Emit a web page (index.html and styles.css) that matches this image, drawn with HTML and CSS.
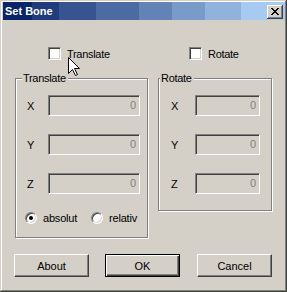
FILE: index.html
```html
<!DOCTYPE html>
<html>

<head>
  <title>Set Bone</title>
  <link rel="stylesheet" href="styles.css">
</head>

<body>
  <div class="window">
    <div class="titlebar">
      <span class="title">Set Bone</span>
      <button class="close" title="Close">
        <svg width="8" height="7" viewBox="0 0 8 7">
          <path d="M0 0h2v1H0zM6 0h2v1H6zM1 1h2v1H1zM5 1h2v1H5zM2 2h4v1H2zM3 3h2v1H3zM2 4h4v1H2zM1 5h2v1H1zM5 5h2v1H5zM0 6h2v1H0zM6 6h2v1H6z" fill="#000"/>
        </svg>
      </button>
    </div>

    <div class="content">
      <div class="toggles">
        <label class="check check-translate"><span class="box"></span>Translate</label>
        <label class="check check-rotate"><span class="box"></span>Rotate</label>
      </div>

      <div class="groups">
        <div class="group group-translate">
          <span class="legend">Translate</span>
          <div class="row"><span class="axis">X</span><span class="field">0</span></div>
          <div class="row"><span class="axis">Y</span><span class="field">0</span></div>
          <div class="row"><span class="axis">Z</span><span class="field">0</span></div>
          <div class="radios">
            <label class="radio"><span class="dot checked"></span>absolut</label>
            <label class="radio"><span class="dot"></span>relativ</label>
          </div>
        </div>

        <div class="group group-rotate">
          <span class="legend">Rotate</span>
          <div class="row"><span class="axis">X</span><span class="field">0</span></div>
          <div class="row"><span class="axis">Y</span><span class="field">0</span></div>
          <div class="row"><span class="axis">Z</span><span class="field">0</span></div>
        </div>
      </div>

      <div class="buttons">
        <button class="btn">About</button>
        <button class="btn btn-default">OK</button>
        <button class="btn btn-cancel">Cancel</button>
      </div>
    </div>

    <svg class="cursor" width="12" height="20" viewBox="0 0 12 20">
      <path d="M0.5 0.5V16.5L4.5 12.5L7.5 18.5L9.5 17.5L6.5 11.5H11.5Z" fill="#fff" stroke="#000" stroke-linejoin="miter"/>
    </svg>
  </div>
</body>

</html>
```

FILE: styles.css
```css
body {
  margin: 0;
  padding: 0;
  background-color: #d4d0c8;
  font-family: "Liberation Sans", Arial, sans-serif;
  font-size: 11px;
  color: #000;
}

.window {
  position: relative;
  width: 287px;
  height: 292px;
  box-sizing: border-box;
  padding: 2px 2px 0 3px;
  background-color: #d4d0c8;
  box-shadow: inset -1px -1px 0 #404040, inset 1px 1px 0 #d4d0c8, inset -2px -2px 0 #808080, inset 2px 2px 0 #fff;
}

/* title bar, stepped like a 256 colour gradient */
.titlebar {
  display: flex;
  align-items: center;
  justify-content: space-between;
  height: 18px;
  padding: 0 2px 0 2px;
  background: linear-gradient(to right,
    #0a246a 0, #0a246a 29px,
    #203c7d 29px, #203c7d 56px,
    #375390 56px, #375390 93px,
    #4d6ba3 93px, #4d6ba3 136px,
    #6383b7 136px, #6383b7 169px,
    #799bca 169px, #799bca 202px,
    #90b2dd 202px, #90b2dd 238px,
    #a6caf0 238px);
}

.title {
  color: #fff;
  font-weight: bold;
  font-size: 11px;
}

.close {
  display: flex;
  align-items: center;
  justify-content: center;
  width: 16px;
  height: 14px;
  padding: 0;
  margin-top: 1px;
  border: none;
  background-color: #d4d0c8;
  box-shadow: inset -1px -1px 0 #404040, inset 1px 1px 0 #fff, inset -2px -2px 0 #808080;
}

.content {
  padding-top: 27px;
}

.toggles,
.groups {
  display: flex;
  gap: 10px;
  margin-left: 12px;
}

.check {
  display: flex;
  align-items: center;
  gap: 6px;
  height: 13px;
  letter-spacing: -0.3px;
}

.check-translate {
  width: 133px;
  padding-left: 33px;
  box-sizing: border-box;
}

.check-rotate {
  padding-left: 31px;
}

.box {
  display: block;
  width: 13px;
  height: 13px;
  box-sizing: border-box;
  background-color: #fff;
  border: 1px solid;
  border-color: #808080 #fff #fff #808080;
  box-shadow: inset 1px 1px 0 #404040, inset -1px -1px 0 #d4d0c8;
}

.groups {
  margin-top: 18px;
  align-items: flex-start;
}

.group {
  position: relative;
  box-sizing: border-box;
  border: 1px solid #808080;
  box-shadow: 1px 1px 0 #fff, inset 1px 1px 0 #fff;
  padding-top: 16px;
}

.group-translate {
  width: 133px;
  height: 160px;
  padding-left: 11px;
}

.group-rotate {
  width: 114px;
  height: 133px;
  padding-left: 12px;
}

.legend {
  position: absolute;
  top: -7px;
  padding: 0 2px 0 1px;
  line-height: 13px;
  background-color: #d4d0c8;
  letter-spacing: -0.3px;
}

.group-translate .legend {
  left: 6px;
}

.group-rotate .legend {
  left: 1px;
}

.row {
  display: flex;
  align-items: center;
  height: 21px;
  margin-bottom: 18px;
}

.row:nth-of-type(4) {
  margin-bottom: 0;
}

.axis {
  width: 21px;
}

.group-rotate .axis {
  width: 24px;
}

.field {
  display: block;
  width: 92px;
  height: 21px;
  box-sizing: border-box;
  padding: 2px 3px 0 0;
  text-align: right;
  color: #808080;
  line-height: 15px;
  border: 1px solid;
  border-color: #808080 #fff #fff #808080;
  box-shadow: inset 1px 1px 0 #404040, inset -1px -1px 0 #d4d0c8;
}

.group-rotate .field {
  width: 65px;
}

.radios {
  display: flex;
  gap: 14px;
  margin-top: -1px;
  margin-left: -2px;
}

.radio {
  display: flex;
  align-items: center;
  gap: 6px;
  height: 13px;
  letter-spacing: -0.2px;
}

.dot {
  display: flex;
  align-items: center;
  justify-content: center;
  width: 12px;
  height: 12px;
  box-sizing: border-box;
  border-radius: 50%;
  background-color: #fff;
  border: 1px solid;
  border-color: #808080 #fff #fff #808080;
  box-shadow: inset 1px 1px 0 #404040, inset -1px -1px 0 #d4d0c8;
}

.dot.checked::after {
  content: "";
  width: 4px;
  height: 4px;
  border-radius: 50%;
  background-color: #000;
}

.buttons {
  display: flex;
  gap: 16px;
  margin: 16px 0 0 11px;
}

.btn {
  width: 75px;
  height: 23px;
  padding: 0;
  font-family: "Liberation Sans", Arial, sans-serif;
  font-size: 11px;
  color: #000;
  background-color: #d4d0c8;
  border: 1px solid;
  border-color: #fff #404040 #404040 #fff;
  box-shadow: inset -1px -1px 0 #808080;
}

.btn-default {
  border-color: #000;
  box-shadow: inset 1px 1px 0 #fff, inset -1px -1px 0 #404040, inset -2px -2px 0 #808080;
}

.btn-cancel {
  margin-left: 1px;
}

.cursor {
  position: absolute;
  left: 68px;
  top: 57px;
}
```
